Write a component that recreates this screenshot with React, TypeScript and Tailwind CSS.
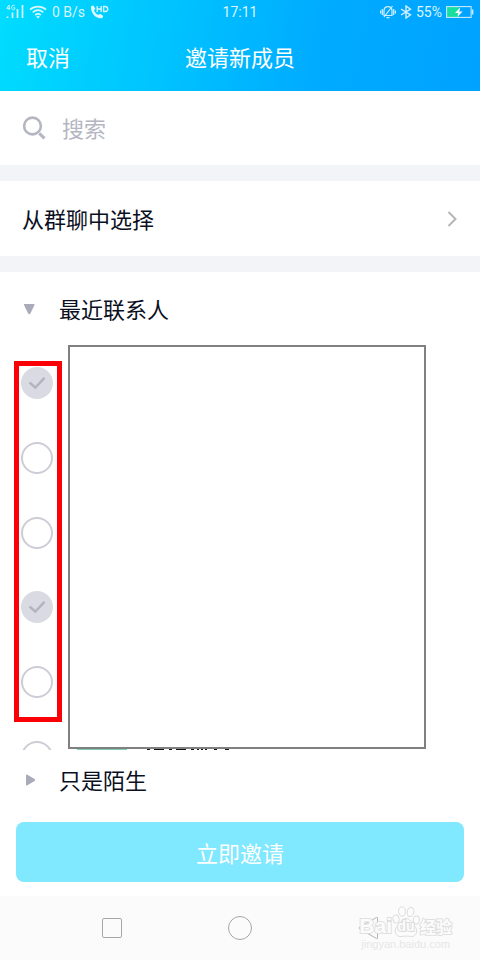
import { useState } from 'react';

const contacts = [
  { id: 1, invited: true },
  { id: 2, invited: false },
  { id: 3, invited: false },
  { id: 4, invited: true },
  { id: 5, invited: false },
];

const SignalIcon = () => (
  <svg className="w-[18px] h-4" viewBox="0 0 18 16" fill="none">
    <path d="M3 1L0.8 4.4H4.2M3.2 1V6M8.8 1.9C7.8 0.6 5.6 1 5.6 3.5C5.6 6 8.2 6.3 8.8 5V3.7H7.4" stroke="#d6f7ff" strokeWidth="0.9" />
    <path d="M1.5 12.5V14M6.5 8.5V14M11.5 5V14M16.5 1V14" stroke="#d6f7ff" strokeWidth="1.7" />
  </svg>
);

const WifiIcon = () => (
  <svg className="w-[18px] h-3.5" viewBox="0 0 18 14" fill="none" stroke="#d6f7ff" strokeWidth="1.7">
    <path d="M1 4.6C5.6 0.6 12.4 0.6 17 4.6M3.7 7.4C6.9 4.8 11.1 4.8 14.3 7.4M6.2 10C8 8.7 10 8.7 11.8 10" />
    <path d="M9 13.6L7 11.5C8.2 10.7 9.8 10.7 11 11.5Z" fill="#d6f7ff" stroke="none" />
  </svg>
);

const HdCallIcon = () => (
  <svg className="w-[19px] h-4" viewBox="0 0 19 16" fill="none">
    <path d="M1 2.5L3.2 1.3L5.4 4.8L4 6.5C5 8.6 6.3 10 8.4 11.1L10 9.8L13.3 12L12.2 14.2C6.3 15.5 0.3 9 1 2.5Z" fill="#dcf8ff" />
    <path d="M7.2 2V8M11.2 2V8M7.2 5H11.2M13.6 2.5V7.5H15.2C18.6 7.5 18.6 2.5 15.2 2.5Z" stroke="#dcf8ff" strokeWidth="1.3" />
  </svg>
);

const MuteIcon = () => (
  <svg className="w-4 h-3.5" viewBox="0 0 16 14" fill="none" stroke="#d2efff" strokeWidth="1.2">
    <path d="M4 10.5V6C4 3 5.6 1.7 8 1.7C10.4 1.7 12 3 12 6V10.5ZM6.5 12.6H9.5M12.5 1L4 12M2.3 4V10M13.7 4V10M0.6 5.5V8.5M15.4 5.5V8.5" />
  </svg>
);

const BluetoothIcon = () => (
  <svg className="w-3 h-3.5" viewBox="0 0 12 14" fill="none" stroke="#d2efff" strokeWidth="1.4">
    <path d="M1 4L10.5 9.8L6 13V1L10.5 4.2L1 10" />
  </svg>
);

const BatteryIcon = () => (
  <svg className="w-7 h-3" viewBox="0 0 28 12" fill="none">
    <rect x="1" y="1" width="12" height="10" fill="#15dfa0" />
    <rect x="0.6" y="0.6" width="24.5" height="10.8" stroke="#c6eaff" strokeWidth="1.1" />
    <path d="M26.5 3.5V8.5" stroke="#c6eaff" strokeWidth="1.8" />
    <path d="M14.2 1.5L9 7H12.2L11.6 10.8L16.6 5.4H13.3Z" fill="#fff" />
  </svg>
);

const PawIcon = () => (
  <svg className="w-7 h-8" viewBox="0 0 28 32" fill="#fdfdfd" stroke="#dadada" strokeWidth="1">
    <ellipse cx="4" cy="13" rx="3" ry="4" transform="rotate(-15 4 13)" />
    <ellipse cx="10" cy="5.5" rx="3.4" ry="4.6" />
    <ellipse cx="18.5" cy="6" rx="3.3" ry="4.6" transform="rotate(12 18.5 6)" />
    <ellipse cx="24.3" cy="14" rx="3" ry="4" transform="rotate(10 24.3 14)" />
    <path d="M14 12.5C18 12.5 19.5 17 22.5 20C26.5 23.5 24.5 31 19.5 30.5C16 30 12.5 30 9 30.5C3 31 1.5 23.5 5.5 20C8.5 17 10 12.5 14 12.5Z" />
  </svg>
);

function Watermark() {
  return (
    <div className="absolute right-7 bottom-2.5 flex flex-col items-center pointer-events-none text-[#fdfdfd] opacity-90">
      <div className="flex items-end h-8">
        <span className="font-['Liberation_Sans'] font-bold text-[21px] leading-6 [-webkit-text-stroke:2px_#dedede] [paint-order:stroke_fill]">Bai</span>
        <span className="relative">
          <PawIcon />
          <span className="absolute inset-x-0 bottom-1 text-center font-['Liberation_Sans'] font-bold text-sm leading-4 [-webkit-text-stroke:2px_#dadada] [paint-order:stroke_fill]">du</span>
        </span>
        <span className="font-bold text-base leading-6 [-webkit-text-stroke:2px_#dedede] [paint-order:stroke_fill]">经验</span>
      </div>
      <span className="font-['Liberation_Sans'] text-[11px] leading-3 text-[#e6e6e6]">jingyan.baidu.com</span>
    </div>
  );
}

function ContactCheck({ id, invited }: { id: number; invited: boolean }) {
  const [checked, setChecked] = useState(invited);

  return (
    <label className="relative block size-8">
      <input
        type="checkbox"
        aria-label={`联系人 ${id}`}
        checked={checked}
        disabled={invited}
        onChange={(e) => setChecked(e.target.checked)}
        className="block size-8 appearance-none rounded-full border-2 border-[#cccdd6] checked:border-[#dadbe2] checked:bg-[#dadbe2]"
      />
      {checked && (
        <svg className="absolute inset-0 size-8 pointer-events-none" viewBox="0 0 32 32" fill="none">
          <path d="M8.5 15.5L14.3 20.5L23.5 10.8" stroke="#b2b4c0" strokeWidth="2.4" />
        </svg>
      )}
    </label>
  );
}

export default function App() {
  return (
    <div className="min-h-screen flex flex-col bg-white text-[22px] leading-8 text-[#0b0f22] font-['Noto_Sans_CJK_SC',sans-serif]">
      <header className="bg-[linear-gradient(100deg,#00dcfe_0%,#00c3ff_35%,#00acff_65%,#00a2ff_100%)] text-white">
        <div className="grid grid-cols-3 items-center h-6 px-1.5 font-['Roboto'] text-sm text-[#d8f5ff]">
          <div className="flex items-center gap-[5px]">
            <SignalIcon />
            <WifiIcon />
            <span className="whitespace-nowrap">0 B/s</span>
            <HdCallIcon />
          </div>
          <span className="text-center">17:11</span>
          <div className="flex items-center justify-end gap-1">
            <MuteIcon />
            <BluetoothIcon />
            <span>55%</span>
            <BatteryIcon />
          </div>
        </div>
        <div className="grid grid-cols-3 items-center h-[67px] px-[26px] pb-1">
          <button type="button" className="justify-self-start">取消</button>
          <h1 className="text-center whitespace-nowrap">邀请新成员</h1>
        </div>
      </header>

      <label className="flex items-center gap-4 h-[74px] px-[22px]">
        <svg className="size-6 shrink-0" viewBox="0 0 24 24" fill="none" stroke="#b4b6c2">
          <circle cx="10.5" cy="10" r="8.4" strokeWidth="2.6" />
          <path d="M17.3 17.3L22.5 22.3" strokeWidth="3" />
        </svg>
        <input
          type="text"
          aria-label="搜索"
          placeholder="搜索"
          className="flex-1 min-w-0 pb-0.5 outline-none placeholder:text-[#b4b6c2] placeholder:opacity-100"
        />
      </label>

      <div className="h-4 bg-[#f3f4f8]" />

      <button type="button" className="flex items-center justify-between h-[75px] px-[22px]">
        <span className="pb-0.5">从群聊中选择</span>
        <svg className="w-3 h-4" viewBox="0 0 12 16" fill="none">
          <path d="M2.5 1L9.5 8L2.5 15" stroke="#b5b5b9" strokeWidth="2" />
        </svg>
      </button>

      <div className="h-4 bg-[#f3f4f8]" />

      <button type="button" className="flex items-center gap-6 h-[74px] px-[23px] text-left">
        <svg className="size-3" viewBox="0 0 12 12" fill="#a9acb8">
          <path d="M1.5 1H11Q12 1 11.5 2L7.5 10.3Q6.3 12 5 10.3L1 2Q0.5 1 1.5 1Z" />
        </svg>
        <span className="pb-0.5">最近联系人</span>
      </button>

      <div className="relative">
        <div className="h-[404px] overflow-hidden">
          <ul className="flex flex-col h-[448px] px-[21px]">
            {contacts.map((contact) => (
              <li key={contact.id} className="flex-1 flex items-center">
                <ContactCheck id={contact.id} invited={contact.invited} />
              </li>
            ))}
            <li className="flex-1 flex items-center gap-6">
              <ContactCheck id={6} invited={false} />
              {/* top edge of the next contact's avatar and name */}
              <svg className="w-[156px] h-5" viewBox="0 0 156 20">
                <path d="M0 3H50" stroke="#7ed0b0" strokeWidth="2" />
                <path d="M70 3H73M77 3H87M92 3H95M99 3H109M114 3H117M120 3H122M124 3H126M128 3H130M137 3H140M148 3H152" stroke="#111" strokeWidth="3" />
              </svg>
            </li>
          </ul>
        </div>
        <div className="absolute -top-px bottom-px left-[68px] right-[54px] bg-white border-2 border-[#808080]" />
        <div className="absolute top-[15px] bottom-7 left-3.5 w-12 border-5 border-[#fb0007] pointer-events-none" />
      </div>

      <button type="button" className="flex items-center gap-6 h-[60px] px-[23px] text-left">
        <svg className="size-3" viewBox="0 0 12 12" fill="#a9acb8">
          <path d="M3 1.5Q3 0 4.4 0.7L11.6 5Q12.8 6 11.6 7L4.4 11.3Q3 12 3 10.5Z" />
        </svg>
        <span className="pb-0.5">只是陌生</span>
      </button>

      <div className="px-4 pt-3 pb-3.5">
        <button type="button" className="w-full h-[60px] rounded-lg bg-[#80e8ff] text-white">
          立即邀请
        </button>
      </div>

      <nav className="relative flex-1 min-h-16 grid grid-cols-3 items-center justify-items-center px-12 bg-[#fbfbfb]">
        <button type="button" aria-label="最近任务" className="size-5 border border-[#a6a6a6] rounded-xs" />
        <button type="button" aria-label="主屏幕" className="size-6 border border-[#a6a6a6] rounded-full" />
        <button type="button" aria-label="返回" className="size-6">
          <svg className="size-6" viewBox="0 0 24 24" fill="none">
            <path d="M21.5 1.8V22.2Q21.5 23 20.5 22.5L3.5 12.8Q2.5 12 3.5 11.2L20.5 1.5Q21.5 1 21.5 1.8Z" stroke="#b4b4b4" />
          </svg>
        </button>
        <Watermark />
      </nav>
    </div>
  );
}
